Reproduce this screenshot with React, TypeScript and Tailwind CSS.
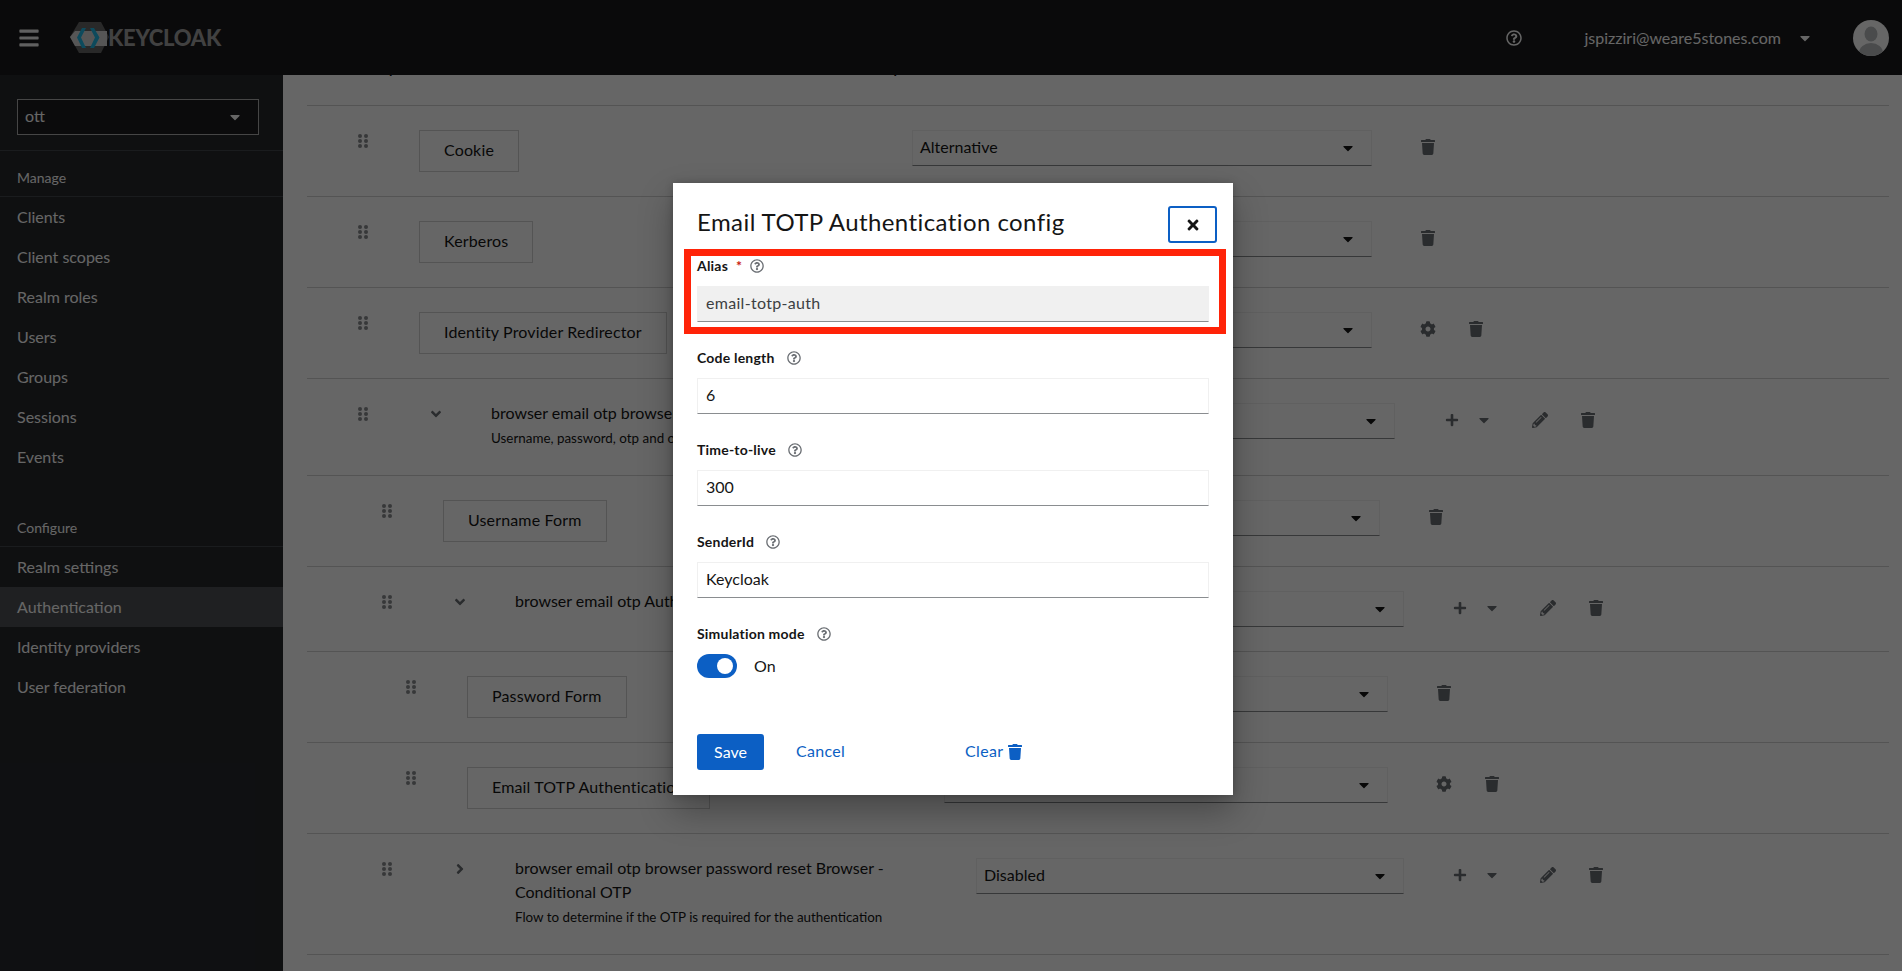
import React from 'react';
import { FaBars, FaCaretDown, FaCog, FaPencilAlt, FaPlus, FaRegQuestionCircle, FaTimes, FaTrash, FaAngleDown, FaAngleRight } from 'react-icons/fa';

const manageItems = ['Clients', 'Client scopes', 'Realm roles', 'Users', 'Groups', 'Sessions', 'Events'];
const configureItems = ['Realm settings', 'Authentication', 'Identity providers', 'User federation'];

const Grip = () => (
  <svg width="10" height="14" viewBox="0 0 10 14" className="shrink-0 mt-[28px]" fill="#8a8d90">
    <circle cx="2" cy="2" r="2" />
    <circle cx="8" cy="2" r="2" />
    <circle cx="2" cy="7" r="2" />
    <circle cx="8" cy="7" r="2" />
    <circle cx="2" cy="12" r="2" />
    <circle cx="8" cy="12" r="2" />
  </svg>
);

const Logo = () => (
  <svg width="40" height="32" viewBox="0 0 40 32" className="shrink-0">
    <polygon points="0,15 9,0 31,0 39,15 31,31 9,31" fill="#666" />
    <polygon points="0,15 5,9 37,9 37,24 5,24" fill="#d8d8d8" />
    <polygon points="12,6 16,6 11,15.500 16,26 12,26 7,15.500" fill="#22b8e6" />
    <polygon points="20,6 24,6 29.500,15.500 24,26 20,26 25,15.500" fill="#22b8e6" />
  </svg>
);

const Avatar = () => (
  <svg width="36" height="36" viewBox="0 0 36 36" className="shrink-0">
    <circle cx="18" cy="18" r="18" fill="#fff" />
    <clipPath id="avatarClip">
      <circle cx="18" cy="18" r="18" />
    </clipPath>
    <g clipPath="url(#avatarClip)" fill="#b8bbbe">
      <ellipse cx="18" cy="14" rx="6.500" ry="7.500" />
      <ellipse cx="18" cy="33" rx="12" ry="10" />
    </g>
  </svg>
);

const Select = ({ value, className }: { value: string; className: string }) => (
  <div className={`flex items-center justify-between h-9 mt-6 pl-[7px] pr-[18px] border border-[#f0f0f0] border-b-[#8a8d90] text-[#151515] shrink-0 ${className}`}>
    <span className="pb-[3px]">{value}</span>
    <FaCaretDown className="w-[10px] h-4 text-[#151515]" />
  </div>
);

const Icon = ({ children, className = '' }: { children: React.ReactNode; className?: string }) => (
  <span className={`flex items-center justify-center w-4 h-9 pb-[2px] text-[#6a6e73] ${className}`}>{children}</span>
);

const TrashAction = () => (
  <div className="flex mt-6 ml-12">
    <Icon><FaTrash className="w-[14px] h-4" /></Icon>
  </div>
);

const GearTrashAction = () => (
  <div className="flex gap-8 mt-6 ml-12">
    <Icon><FaCog className="w-4 h-4" /></Icon>
    <Icon><FaTrash className="w-[14px] h-4" /></Icon>
  </div>
);

const FlowActions = ({ className }: { className: string }) => (
  <div className={`flex mt-6 ${className}`}>
    <Icon><FaPlus className="w-[14px] h-[14px]" /></Icon>
    <Icon className="ml-4"><FaCaretDown className="w-[10px] h-4" /></Icon>
    <Icon className="ml-10"><FaPencilAlt className="w-4 h-4" /></Icon>
    <Icon className="ml-8"><FaTrash className="w-[14px] h-4" /></Icon>
  </div>
);

const StepRow = ({ name, rowClass, cellClass, children }: { name: string; rowClass: string; cellClass: string; children: React.ReactNode }) => (
  <div className={`flex items-start h-[91px] border-b border-[#d2d2d2] ${rowClass}`}>
    <Grip />
    <div className={`ml-[51px] mt-6 shrink-0 ${cellClass}`}>
      <span className="inline-flex items-center h-[42px] px-6 pb-[3px] border border-[#d2d2d2] text-[#151515] tracking-[0.15px] whitespace-nowrap">{name}</span>
    </div>
    {children}
  </div>
);

const FlowRow = ({ title, desc, open, rowClass, cellClass, children }: { title: string; desc?: string; open: boolean; rowClass: string; cellClass: string; children: React.ReactNode }) => (
  <div className={`flex items-start border-b border-[#d2d2d2] ${rowClass}`}>
    <Grip />
    <span className="flex items-center justify-center w-4 h-6 ml-[60px] mt-[23px] text-[#6a6e73] shrink-0">
      {open ? <FaAngleDown className="w-4 h-4" /> : <FaAngleRight className="w-4 h-4" />}
    </span>
    <div className={`ml-[47px] mt-[22px] shrink-0 ${cellClass}`}>
      <div className="leading-6 text-[#151515]">{title}</div>
      {desc && <div className="mt-[3px] text-[13.4px] leading-[21px] text-[#151515]">{desc}</div>}
    </div>
    {children}
  </div>
);

const Field = ({ label, value, required, disabled }: { label: string; value: string; required?: boolean; disabled?: boolean }) => (
  <div className="mb-6">
    <div className="flex items-center h-6 mb-2 text-sm font-bold tracking-[0.2px] text-[#151515]">
      <span>{label}</span>
      {required && <span className="ml-2 text-[#c9190b]">*</span>}
      <FaRegQuestionCircle className={`w-[14px] h-[14px] text-[#6a6e73] ${required ? 'ml-2' : 'ml-3'}`} />
    </div>
    <input
      readOnly
      value={value}
      className={`block w-full h-9 pl-2 pb-[3px] border border-[#f0f0f0] border-b-[#8a8d90] outline-none ${disabled ? 'bg-[#f0f0f0] text-[#3c3f42] tracking-[0.3px]' : 'bg-white text-[#151515]'}`}
    />
  </div>
);

export default function App() {
  return (
    <div className="relative h-[971px] overflow-hidden bg-white font-[family-name:Lato,sans-serif] text-base">
      <header className="flex items-center h-[75px] pl-[19px] pr-[13px] bg-[#1b1b1d] text-white">
        <FaBars className="w-5 h-[22px] text-[#f0f0f0]" />
        <div className="ml-[31px]"><Logo /></div>
        <span className="-ml-[2px] text-[22px] leading-none font-black tracking-[-0.25px] text-[#a4a4a4]">KEYCLOAK</span>
        <FaRegQuestionCircle className="w-4 h-4 ml-auto" />
        <span className="ml-[62px]">jspizziri@weare5stones.com</span>
        <FaCaretDown className="w-[10px] h-4 ml-[19px]" />
        <div className="ml-[43px]"><Avatar /></div>
      </header>

      <div className="flex h-[896px]">
        <aside className="w-[283px] shrink-0 bg-[#26292c] text-white">
          <div className="h-[76px] pt-6 pl-[17px] border-b border-[#43474b]">
            <div className="flex items-center justify-between w-[242px] h-9 pl-[7px] pr-[18px] bg-[#1c1d1f] border border-[#b0b0b0]">
              <span className="pb-[3px]">ott</span>
              <FaCaretDown className="w-[10px] h-4" />
            </div>
          </div>
          <div className="flex items-center h-[46px] pt-2 pl-[17px] text-sm border-b border-[#43474b]">Manage</div>
          {manageItems.map((item) => (
            <div key={item} className="flex items-center h-10 pl-[17px]">{item}</div>
          ))}
          <div className="flex items-center h-[46px] mt-6 pt-2 pl-[17px] text-sm border-b border-[#43474b]">Configure</div>
          {configureItems.map((item) => (
            <div key={item} className={`flex items-center h-10 pl-[17px] pb-px ${item === 'Authentication' ? 'bg-[#4f5255]' : ''}`}>{item}</div>
          ))}
        </aside>

        <main className="flex-1 overflow-hidden pl-6 pr-[13px] text-[#151515]">
          <div className="flex items-end h-[31px] pb-[28px] border-b border-[#d2d2d2] text-sm font-bold leading-4">
            <span className="ml-[62px]">Steps</span>
            <span className="ml-[470px]">Requirement</span>
          </div>
          <StepRow name="Cookie" rowClass="pl-[51px]" cellClass="w-[493px]">
            <Select value="Alternative" className="w-[460px]" />
            <TrashAction />
          </StepRow>
          <StepRow name="Kerberos" rowClass="pl-[51px]" cellClass="w-[493px]">
            <Select value="Disabled" className="w-[460px]" />
            <TrashAction />
          </StepRow>
          <StepRow name="Identity Provider Redirector" rowClass="pl-[51px]" cellClass="w-[493px]">
            <Select value="Disabled" className="w-[460px]" />
            <GearTrashAction />
          </StepRow>
          <FlowRow
            title="browser email otp browser forms"
            desc="Username, password, otp and other auth forms"
            open
            rowClass="h-[97px] pl-[51px]"
            cellClass="w-[469px]"
          >
            <Select value="Required" className="w-[435px]" />
            <FlowActions className="ml-[49px]" />
          </FlowRow>
          <StepRow name="Username Form" rowClass="pl-[75px]" cellClass="w-[485px]">
            <Select value="Required" className="w-[452px]" />
            <TrashAction />
          </StepRow>
          <FlowRow
            title="browser email otp Authentication"
            open
            rowClass="h-[85px] pl-[75px]"
            cellClass="w-[461px]"
          >
            <Select value="Required" className="w-[428px]" />
            <FlowActions className="ml-12" />
          </FlowRow>
          <StepRow name="Password Form" rowClass="pl-[99px]" cellClass="w-[477px]">
            <Select value="Required" className="w-[444px]" />
            <TrashAction />
          </StepRow>
          <StepRow name="Email TOTP Authentication" rowClass="pl-[99px]" cellClass="w-[477px]">
            <Select value="Required" className="w-[444px]" />
            <GearTrashAction />
          </StepRow>
          <FlowRow
            title="browser email otp browser password reset Browser - Conditional OTP"
            desc="Flow to determine if the OTP is required for the authentication"
            open={false}
            rowClass="h-[121px] pl-[75px]"
            cellClass="w-[461px] pr-[40px]"
          >
            <Select value="Disabled" className="w-[428px]" />
            <FlowActions className="ml-12" />
          </FlowRow>
        </main>
      </div>

      <div className="absolute inset-0 bg-black/60" />

      <div className="absolute left-[673px] top-[183px] w-[560px] h-[612px] px-6 pt-[23px] bg-white text-[#151515] shadow-[0_16px_32px_rgba(3,3,3,0.3),0_0_8px_rgba(3,3,3,0.2)]">
        <div className="flex items-center justify-between h-[37px] -mr-2 mb-[11px]">
          <h1 className="text-2xl leading-none -mt-[6px] tracking-[0.42px]">Email TOTP Authentication config</h1>
          <button className="flex items-center justify-center w-[49px] h-[37px] border-2 border-[#0c5fc4] rounded-[3px]">
            <FaTimes className="w-3 h-4 text-[#151515]" />
          </button>
        </div>

        <Field label="Alias" value="email-totp-auth" required disabled />
        <Field label="Code length" value="6" />
        <Field label="Time-to-live" value="300" />
        <Field label="SenderId" value="Keycloak" />

        <div className="flex items-center h-6 mb-2 text-sm font-bold tracking-[0.2px]">
          <span>Simulation mode</span>
          <FaRegQuestionCircle className="w-[14px] h-[14px] ml-3 text-[#6a6e73]" />
        </div>
        <div className="flex items-center h-6">
          <span className="flex items-center justify-end w-10 h-6 pr-1 rounded-full bg-[#0c5fc4]">
            <span className="w-4 h-4 rounded-full bg-white" />
          </span>
          <span className="ml-[17px] pb-px">On</span>
        </div>

        <div className="flex items-center mt-14">
          <button className="w-[67px] h-9 pb-px rounded-[3px] bg-[#0c5fc4] text-white">Save</button>
          <span className="ml-8 pb-[2px] tracking-[0.3px] text-[#0c5fc4]">Cancel</span>
          <span className="flex items-center gap-1 ml-[120px] tracking-[0.3px] text-[#0c5fc4]">
            <span className="pb-[2px]">Clear</span>
            <FaTrash className="w-[14px] h-4 ml-px" />
          </span>
        </div>

        <div className="absolute left-[11px] top-[66px] w-[542px] h-[85px] border-[7px] border-[#ff2308]" />
      </div>
    </div>
  );
}
